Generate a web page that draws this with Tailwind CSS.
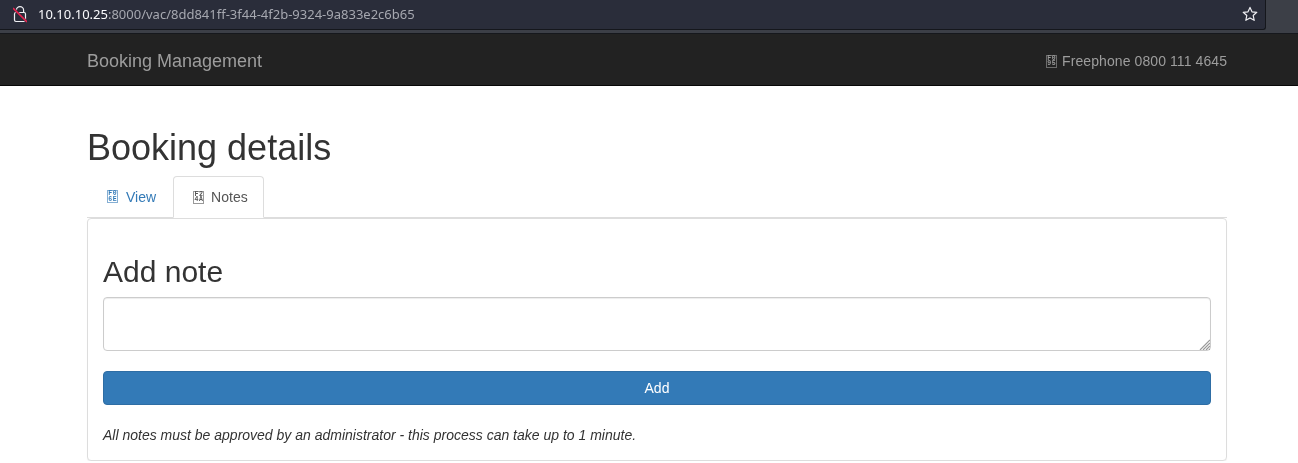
<!DOCTYPE html>
<html lang="en">
<head>
<meta charset="utf-8">
<title>Booking Management</title>
<script src="https://cdn.jsdelivr.net/npm/@tailwindcss/browser@4"></script>
</head>
<body class="bg-white font-['Liberation_Sans',sans-serif] text-[14px] leading-[20px] text-[#333]">

  <!-- browser chrome -->
  <div class="h-[34px] bg-[#3c3f47] border-b border-[#16181d]">
    <div class="w-[1266px] h-[30px] bg-[#2a2d3a] border-b border-r border-[#15171c] rounded-br-[3px] flex items-center pl-[13px] pr-[7px]">
      <svg class="w-[14px] h-[17px] shrink-0" viewBox="0 0 14 17" fill="none">
        <path d="M3.4 6.5V4.2a3.6 3.6 0 0 1 7.2 0V6.5" stroke="#f0f0f4" stroke-width="1.2"/>
        <rect x="1.5" y="6.5" width="11" height="9" rx="1.4" stroke="#f0f0f4" stroke-width="1.2"/>
        <path d="M0 2 14 16" stroke="#2a2d3a" stroke-width="2.6"/>
        <path d="M0 2 14 16" stroke="#e8234f" stroke-width="1.6"/>
      </svg>
      <div class="ml-[11px] mb-[2px] font-['Noto_Sans',sans-serif] text-[13px] text-[#a6a8b0] whitespace-nowrap will-change-transform"><span class="text-[#fbfbfe]">10.10.10.25</span>:8000/vac/8dd841ff-3f44-4f2b-9324-9a833e2c6b65</div>
      <svg class="ml-auto mb-[2px] w-[16px] h-[16px]" viewBox="0 0 16 16" fill="none">
        <path d="M8 1.4 10 5.8 14.8 6.3 11.2 9.5 12.2 14.3 8 11.9 3.8 14.3 4.8 9.5 1.2 6.3 6 5.8Z" stroke="#f0f0f4" stroke-width="1.2" stroke-linejoin="round"/>
      </svg>
    </div>
  </div>

  <!-- navbar -->
  <nav class="h-[52px] bg-[#222] border-b border-[#080808] flex items-center justify-between pl-[87px] pr-[71px] pt-[2px]">
    <a class="text-[18px] text-[#9d9d9d] will-change-transform">Booking Management</a>
    <div class="flex items-center gap-[5px] text-[#9d9d9d] will-change-transform">
      <span class="w-[11px] h-[13px] border border-current/60 grid grid-cols-2 font-['Liberation_Mono',monospace] font-bold text-[6.5px] leading-[5.5px] text-center"><i class="not-italic">F</i><i class="not-italic">0</i><i class="not-italic">9</i><i class="not-italic">5</i></span>
      <span class="tracking-[0.09px]">Freephone 0800 111 4645</span>
    </div>
  </nav>

  <main class="pl-[87px] pr-[71px] will-change-transform">
    <h1 class="mt-[42px] mb-[8px] text-[36px] leading-[40px]">Booking details</h1>

    <!-- tabs -->
    <ul class="flex gap-[2px] h-[42px] border-b border-[#ddd] pl-[2px]">
      <li class="flex items-center pl-[18px] pr-[15px] h-[41px] text-[#337ab7]">
        <span class="w-[11px] h-[13px] border border-current/60 grid grid-cols-2 font-['Liberation_Mono',monospace] font-bold text-[6.5px] leading-[5.5px] text-center"><i class="not-italic">F</i><i class="not-italic">0</i><i class="not-italic">6</i><i class="not-italic">E</i></span>
        <span class="ml-[8px]">View</span>
      </li>
      <li class="flex items-center pl-[19px] pr-[15px] h-[42px] bg-white border border-[#ddd] border-b-white rounded-t-[4px] text-[#555]">
        <span class="w-[11px] h-[13px] border border-current/60 grid grid-cols-2 font-['Liberation_Mono',monospace] font-bold text-[6.5px] leading-[5.5px] text-center"><i class="not-italic">F</i><i class="not-italic">2</i><i class="not-italic">4</i><i class="not-italic">A</i></span>
        <span class="ml-[7px]">Notes</span>
      </li>
    </ul>

    <!-- panel -->
    <section class="h-[243px] bg-white border border-[#ddd] rounded-[4px] shadow-[0_1px_1px_rgba(0,0,0,0.05)] px-[15px]">
      <h2 class="mt-[36px] mb-[9px] text-[30px] leading-[33px]">Add note</h2>
      <div class="relative">
        <textarea class="block w-full h-[54px] resize-none bg-white border border-[#ccc] rounded-[4px] px-[12px] py-[6px] shadow-[inset_0_1px_1px_rgba(0,0,0,0.075)]"></textarea>
        <svg class="absolute right-[1px] bottom-[1px] w-[11px] h-[11px]" viewBox="0 0 11 11" stroke="#999" stroke-width="1.2">
          <path d="M1 11 11 1M4 11 11 4M7 11 11 7M10 11 11 10"/>
        </svg>
      </div>
      <button class="block w-full h-[34px] mt-[20px] bg-[#337ab7] border border-[#2e6da4] rounded-[4px] text-white">Add</button>
      <p class="mt-[20px] italic">All notes must be approved by an administrator - this process can take up to 1 minute.</p>
    </section>
  </main>
</body>
</html>
